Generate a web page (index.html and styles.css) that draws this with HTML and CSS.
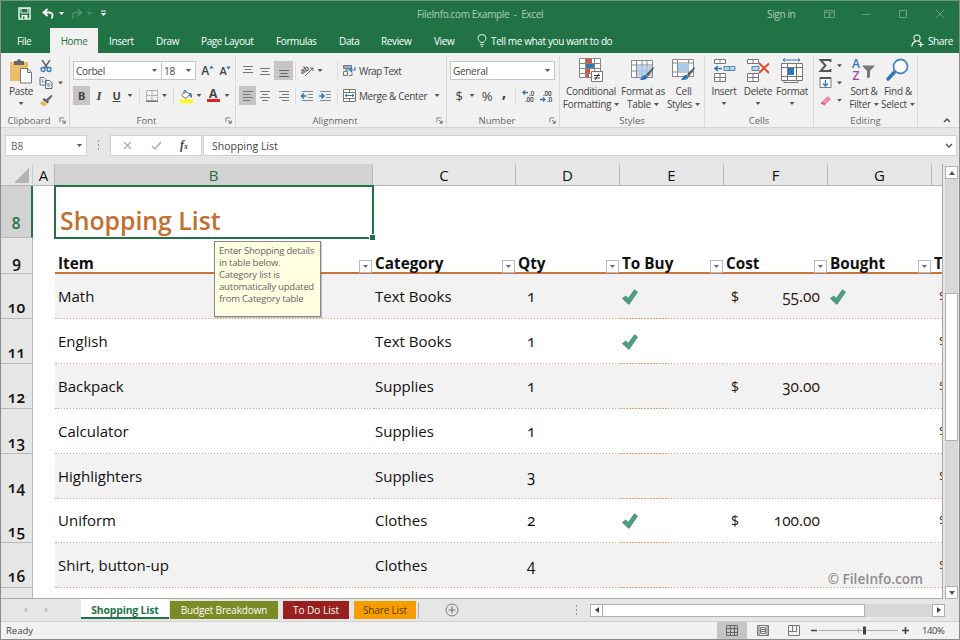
FILE: index.html
```html
<!DOCTYPE html>
<html lang="en">
<head>
<meta charset="utf-8">
<title>FileInfo.com Example - Excel</title>
<link rel="stylesheet" href="styles.css">
</head>
<body>
<svg width="0" height="0" class="defs">
  <symbol id="check" viewBox="0 0 18 18"><path d="M1.500 10.500 4.800 8l2.400 2.600L13.500 1.800l3 2.200-8.600 12.400z" fill="#4fa184" stroke="#3c7f69" stroke-width=".8"/></symbol>
  <symbol id="launch" viewBox="0 0 8 8"><path d="M1 6V1h5" fill="none" stroke="#777"/><path d="M3.500 3.500 7 7M7 4v3H4" fill="none" stroke="#555"/></symbol>
  <symbol id="tbl" viewBox="0 0 26 26"><path d="M1.500 2.500h21v17h-21zM1.500 7h21M1.500 13h21M6.500 2.500v17M12 2.500v17M17 2.500v17" fill="#fff" stroke="#888"/></symbol>
  <symbol id="brush" viewBox="0 0 16 16"><path d="M15.500.8 8 8.500l2 2 5.800-8z" fill="#5a5a5a"/><path d="M7.500 8.800c-2.500-.3-3 2-5.500 5 3 .6 7 .2 7.800-3z" fill="#2f78b7"/></symbol>
</svg>
<div class="window">
  <header class="title">
    <div class="quick">
      <svg width="13" height="13" viewBox="0 0 13 13"><path d="M1 1h11v11H1z" fill="none" stroke="#e8f3ec" stroke-width="1.500"/><path d="M3 1.500h7V6H3z" fill="#217346" stroke="#e8f3ec"/><path d="M3.500 8h6v4h-6z" fill="#e8f3ec"/><path d="M5 9.500h1.500V12H5z" fill="#217346"/></svg>
      <svg class="undo" width="13" height="12" viewBox="0 0 13 12"><path d="M5.500 1 1.500 4.500l4 3.500M2 4.500h5.500c3 0 4.300 3 2 6" fill="none" stroke="#fff" stroke-width="1.900"/></svg>
      <i class="dd white"></i>
      <svg class="redo" width="13" height="12" viewBox="0 0 13 12"><path d="M7.500 1 11.500 4.500l-4 3.500M11 4.500H5.500c-3 0-4.300 3-2 6" fill="none" stroke="#4f9470" stroke-width="1.500"/></svg>
      <i class="dd dim"></i>
      <svg class="custom" width="7" height="7" viewBox="0 0 7 7"><path d="M1 1h5" stroke="#fff"/><path d="M.8 3h5.400L3.500 6z" fill="#fff"/></svg>
    </div>
    <div class="name">FileInfo.com Example&nbsp; -&nbsp; Excel</div>
    <div class="signin">Sign in</div>
    <svg class="wctl" width="122" height="12" viewBox="0 0 122 12" fill="none" stroke="#69a583"><path d="M.5 2.500h10v7H.5zM.5 4.500h10M5.500 9V5.500M4 7l1.500-1.500L7 7M38 6.500h8M75.500 2.500h7v7h-7zM112 2l8 8M120 2l-8 8"/></svg>
  </header>
  <nav class="tabs">
    <span class="t1">File</span><span class="t2">Home</span><span class="t3">Insert</span><span class="t4">Draw</span><span class="t5">Page Layout</span><span class="t6">Formulas</span><span class="t7">Data</span><span class="t8">Review</span><span class="t9">View</span>
    <svg class="bulb" width="10" height="13" viewBox="0 0 10 13" fill="none" stroke="#e4f1e9"><path d="M3.300 8.500C3.300 7 1 6.500 1 4.200a4 3.700 0 0 1 8 0c0 2.300-2.300 2.800-2.300 4.300zM3.300 10.500h3.400M4 12.300h2"/></svg>
    <span class="tell">Tell me what you want to do</span>
    <svg class="person" width="13" height="13" viewBox="0 0 13 13" fill="none" stroke="#fff"><circle cx="6" cy="4" r="3.200"/><path d="M.8 12.500C1.200 9 3 7.800 4.800 7.200M7.500 7.200l1.500.8M7 10.500h5.500M9.800 8v5" stroke-width="1.200"/></svg>
    <span class="share">Share</span>
  </nav>

  <section class="ribbon">
    <div class="group clip">
      <div class="body">
        <div class="big paste">
          <svg width="26" height="26" viewBox="0 0 26 26"><path d="M2 4h18v19H2z" fill="#ebbd6a"/><path d="M6 3h3c0-2.500 4-2.500 4 0h3v4H6z" fill="#666"/><path d="M12.500 10.500h7l4 4V25h-11z" fill="#fff" stroke="#777"/><path d="M19.500 10.500v4h4" fill="none" stroke="#777"/></svg>
          <span>Paste</span><i class="dd"></i>
        </div>
        <div class="stack">
          <div><svg width="14" height="14" viewBox="0 0 14 14"><path d="M3 1l5.500 8M11 1 5.500 9" stroke="#666" stroke-width="1.500"/><g fill="none" stroke="#2f78b7" stroke-width="1.300"><circle cx="4" cy="10.500" r="2"/><circle cx="10" cy="10.500" r="2"/></g></svg></div>
          <div><svg width="14" height="13" viewBox="0 0 14 13" fill="#fff" stroke="#666"><path d="M1 1.500h4l2 2V9H1zM6.500 4.500h4l2.500 2.500v5.500H6.500z"/><path d="M2.500 4h2M2.500 6h3M8 8h3.500M8 10h3.500" stroke="#2f78b7"/></svg><i class="dd"></i></div>
          <div><svg width="14" height="13" viewBox="0 0 14 13"><path d="M12.500.8 7 5.500l2 2L13.500 2z" fill="#666"/><path d="M5 4l5 4-1.500 1.500-5-4z" fill="#555"/><path d="M3 6.500 1 10l4.500 2.500L8 10z" fill="#ebb355"/></svg></div>
        </div>
      </div>
      <div class="label">Clipboard<svg class="ln" width="7" height="7"><use href="#launch"/></svg></div>
    </div>

    <div class="group font">
      <div class="r1"><div class="sel corbel">Corbel<i class="dd"></i></div><div class="sel size">18<i class="dd"></i></div><span class="grow">A<svg width="5" height="4"><path d="M.3 3.500 2.500.5l2.200 3z" fill="#2f78b7"/></svg></span><span class="grow small">A<svg width="5" height="4"><path d="M.3.5h4.400L2.500 3.500z" fill="#2f78b7"/></svg></span></div>
      <div class="r2">
        <b class="on">B</b><i class="ital">I</i><b class="und">U</b><i class="dd"></i><s></s>
        <svg width="12" height="12" viewBox="0 0 12 12" fill="none" stroke="#999"><path d="M.5.5h11v10H.5zM6 .5v10M.5 5.500h11" stroke-dasharray="1.500 .7"/><path d="M0 11.300h12" stroke="#555"/></svg><i class="dd"></i><s></s>
        <svg width="15" height="14" viewBox="0 0 15 14"><path d="M6 2.500 2.500 6.500 7 9.500 11 5z" fill="#fff" stroke="#777"/><path d="M5 5V1.500h2V4" fill="none" stroke="#777"/><path d="M11 3.500c2 1 2.500 3 1.500 5.500C11.500 8 10 7 10.500 5z" fill="#2f78b7"/><path d="M1 10.500h13V14H1z" fill="#ff0"/></svg><i class="dd"></i>
        <span class="fcol">A</span><i class="dd"></i>
      </div>
      <div class="label">Font<svg class="ln" width="7" height="7"><use href="#launch"/></svg></div>
    </div>

    <div class="group align">
      <div class="r1">
        <span><svg width="12" height="12" stroke="#777"><path d="M1 1.500h10M2.500 4.500h7M1 7.500h10"/></svg></span>
        <span><svg width="12" height="12" stroke="#777"><path d="M1 3.500h10M2.500 6.500h7M1 9.500h10"/></svg></span>
        <span class="on"><svg width="12" height="12" stroke="#666"><path d="M1 5.500h10M2.500 8.500h7M1 11.500h10"/></svg></span><s></s>
        <svg width="14" height="13" viewBox="0 0 14 13"><text x="0" y="8" class="ab" transform="rotate(-30 5 8)">ab</text><path d="M4 12 12 4M12 7V4H9" fill="none" stroke="#666"/></svg><i class="dd"></i><s class="far"></s>
        <svg width="13" height="13" viewBox="0 0 13 13" fill="none" stroke="#777"><path d="M.5 1.500h8v3h-8zM.5 7.500h4v4h-4zM6 11.500h3v-3"/><path d="M1 3h8" stroke="#2f78b7"/><path d="M2 6h10v-3M9 4 7 6l2 2" stroke="#2f78b7" stroke-width="1.200"/></svg><span class="txt wrap">Wrap Text</span>
      </div>
      <div class="r2">
        <span class="on"><svg width="12" height="12" stroke="#777"><path d="M1 1.500h10M1 4.500h7M1 7.500h10M1 10.500h7"/></svg></span>
        <span><svg width="12" height="12" stroke="#777"><path d="M1 1.500h10M3 4.500h6M1 7.500h10M3 10.500h6"/></svg></span>
        <span><svg width="12" height="12" stroke="#777"><path d="M1 1.500h10M4 4.500h7M1 7.500h10M4 10.500h7"/></svg></span><s></s>
        <svg width="14" height="12" stroke="#888"><path d="M2 1.500h11M8 4.500h5M8 7.500h5M2 10.500h11"/><path d="M6.500 6H2M4 3.500 1.500 6 4 8.500" fill="none" stroke="#2f78b7" stroke-width="1.600"/></svg>
        <svg width="14" height="12" stroke="#888"><path d="M2 1.500h11M8 4.500h5M8 7.500h5M2 10.500h11"/><path d="M1 6h4.500M3.500 3.500 6 6 3.500 8.500" fill="none" stroke="#2f78b7" stroke-width="1.600"/></svg><s></s>
        <svg width="13" height="13" viewBox="0 0 13 13" fill="#fff" stroke="#777"><path d="M.5.5h12v12H.5zM.5 3.500h12M.5 9.500h12M6.500.5v3M6.500 9.500v3"/><path d="M2 6.500h9M4 5 2 6.500 4 8M9 5l2 1.500L9 8" fill="none" stroke="#2f78b7"/></svg><span class="txt merge">Merge &amp; Center</span><i class="dd"></i>
      </div>
      <div class="label">Alignment<svg class="ln" width="7" height="7"><use href="#launch"/></svg></div>
    </div>

    <div class="group number">
      <div class="r1"><div class="sel general">General<i class="dd"></i></div></div>
      <div class="r2"><span class="sym">$</span><i class="dd"></i><span class="sym">%</span><b class="comma">,</b><s></s>
        <svg width="14" height="14" viewBox="0 0 14 14"><path d="M1 3.500h5M3 1.500l-2 2 2 2" fill="none" stroke="#2f78b7" stroke-width="1.300"/><text x="7" y="6.500" class="dec">.0</text><text x="3" y="13" class="dec">.00</text></svg>
        <svg width="14" height="14" viewBox="0 0 14 14"><path d="M0 10.500h5M3 8.500l2 2-2 2" fill="none" stroke="#2f78b7" stroke-width="1.300"/><text x="3" y="6.500" class="dec">.00</text><text x="7" y="13" class="dec">.0</text></svg></div>
      <div class="label">Number<svg class="ln" width="7" height="7"><use href="#launch"/></svg></div>
    </div>

    <div class="group styles">
      <div class="body">
        <div class="big cond"><svg width="26" height="26" viewBox="0 0 26 26"><path d="M1.500.5h21v19h-21zM1.500 5.500h21M1.500 10.500h21M1.500 15.500h21M7.500.5v19M16.500.5v19" fill="#fff" stroke="#888"/><path d="M8 1h6v4H8zM8 11h4v4H8z" fill="#d9533c"/><path d="M8 6h8v4H8z" fill="#3378b5"/><path d="M8 16h3v3H8z" fill="#d9533c"/><path d="M13.500 13.500h11v10h-11z" fill="#fff" stroke="#777"/><path d="M16 17.500h6M16 20h6M21 15.500l-4 6.500" stroke="#333"/></svg><span>Conditional<br>Formatting<i class="dd"></i></span></div>
        <div class="big fmt"><svg width="26" height="26" viewBox="0 0 26 26"><use href="#tbl"/><path d="M7 7.500h15v11H7z" fill="#a9c9e8" opacity=".8"/><use href="#brush" x="7" y="8" width="18" height="16"/></svg><span>Format as<br>Table<i class="dd"></i></span></div>
        <div class="big cell"><svg width="26" height="26" viewBox="0 0 26 26"><path d="M1.500 1.500h21v17h-21zM1.500 5h21M1.500 14h21M6.500 1.500v17M17.500 1.500v17" fill="#fff" stroke="#888"/><path d="M7 5.500h11v8H7z" fill="#a9c9e8"/><use href="#brush" x="7" y="8" width="18" height="16"/></svg><span>Cell<br>Styles<i class="dd"></i></span></div>
      </div>
      <div class="label">Styles</div>
    </div>

    <div class="group cells">
      <div class="body">
        <div class="big"><svg width="24" height="26" viewBox="0 0 24 26"><path d="M2.500 1.500h11v4h-11zM8 1.500v4M2.500 15.500h11v8h-11zM8 15.500v8M2.500 19.500h11" fill="#fff" stroke="#777"/><path d="M12 8.500h11v4H12zM17.500 8.500v4" fill="#b8d2e8" stroke="#5588ad"/><path d="M3 10.500h7M6 8l-3 2.500L6 13" fill="none" stroke="#2f78b7" stroke-width="1.600"/></svg><span>Insert</span><i class="dd"></i></div>
        <div class="big"><svg width="24" height="26" viewBox="0 0 24 26"><path d="M1.500 1.500h11v4h-11zM7 1.500v4M1.500 15.500h11v8h-11zM7 15.500v8M1.500 19.500h11" fill="#fff" stroke="#777"/><path d="M6 8.500h7v4H6z" fill="#b8d2e8" stroke="#5588ad"/><path d="M13 5l10 10M23 5.500 13 15" stroke="#d9532c" stroke-width="2"/></svg><span>Delete</span><i class="dd"></i></div>
        <div class="big"><svg width="24" height="26" viewBox="0 0 24 26"><path d="M1.500 5.500h21v17h-21zM1.500 9.500h21M1.500 18.500h21M7.500 5.500v17M16.500 5.500v17M4 22.500v2h14v-2" fill="#fff" stroke="#777"/><path d="M8 10h6v7H8z" fill="#2f78b7"/><path d="M3 2h17M5 .3 3 2l2 1.700M18 .3 20 2l-2 1.700" fill="none" stroke="#2f78b7"/></svg><span>Format</span><i class="dd"></i></div>
      </div>
      <div class="label">Cells</div>
    </div>

    <div class="group editing">
      <div class="body">
        <div class="stack">
          <div><svg width="13" height="13" viewBox="0 0 13 13"><path d="M11.500 3V1H1.500l5 5.500-5 5.500h10v-2" fill="none" stroke="#555" stroke-width="1.900"/></svg><i class="dd"></i></div>
          <div><svg width="13" height="13" viewBox="0 0 13 13"><path d="M1 1.500h11v10H1z" fill="#fff" stroke="#777"/><path d="M1 2h11" stroke="#555" stroke-width="2"/><path d="M6.500 4v6M4 7.500 6.500 10 9 7.500" fill="none" stroke="#2f78b7" stroke-width="1.300"/></svg><i class="dd"></i></div>
          <div><svg width="13" height="13" viewBox="0 0 13 13"><path d="M8.500 2 12 5 8 9 4 6.500z" fill="#ef8ba5"/><path d="M3.500 7 7.500 9.500 5.500 11.500 1.500 9.500z" fill="#d96787"/></svg><i class="dd"></i></div>
        </div>
        <div class="big sort"><svg width="26" height="26" viewBox="0 0 26 26"><text x="1" y="10" class="sa">A</text><text x="1.500" y="22" class="sz">Z</text><path d="M11 7.500h13l-5 5.500v6l-3 1.500V13z" fill="#777"/></svg><span>Sort &amp;<br>Filter<i class="dd"></i></span></div>
        <div class="big find"><svg width="24" height="26" viewBox="0 0 24 26"><path d="M9 13.500 2 21" stroke="#2f78b7" stroke-width="3.500" stroke-linecap="round"/><circle cx="14.500" cy="8.500" r="7" fill="#fff" stroke="#4a88c0" stroke-width="1.800"/></svg><span>Find &amp;<br>Select<i class="dd"></i></span></div>
      </div>
      <div class="label">Editing</div>
    </div>
    <svg class="collapse" width="8" height="6"><path d="M1 5l3-3 3 3" fill="none" stroke="#555" stroke-width="1.500"/></svg>
  </section>

  <section class="formula">
    <div class="box ref">B8<i class="dd"></i></div>
    <svg class="dots" width="3" height="10" fill="#999"><path d="M1 0h1v2H1zM1 4h1v2H1zM1 8h1v2H1z"/></svg>
    <div class="box fx"><svg width="9" height="9" stroke="#aaa" stroke-width="1.200"><path d="M1 1l7 7M8 1 1 8"/></svg><svg width="11" height="9" fill="none" stroke="#aaa" stroke-width="1.400"><path d="M1 5l3 3 6-7"/></svg><em>f<small>x</small></em></div>
    <div class="box value"><span>Shopping List</span><svg width="8" height="6"><path d="M1 1l3 3 3-3" fill="none" stroke="#555" stroke-width="1.400"/></svg></div>
  </section>

  <main class="area">
    <div class="sheet">
      <div class="cols line"><div class="corner"><svg width="15" height="15"><path d="M15 0v15H0z" fill="#b4b4b4"/></svg></div><div>A</div><div class="cur">B</div><div>C</div><div>D</div><div>E</div><div>F</div><div>G</div><div></div></div>
      <div class="line row8"><div class="rh cur">8</div><div></div><div class="active">Shopping List<div class="tip">Enter Shopping details<br>in table below.<br>Category list is<br>automatically updated<br>from Category table</div></div></div>
      <div class="line row9"><div class="rh">9</div><div></div><div class="h">Item<u></u></div><div class="h">Category<u></u></div><div class="h">Qty<u></u></div><div class="h">To Buy<u></u></div><div class="h">Cost<u></u></div><div class="h">Bought<u></u></div><div class="h">T</div></div>
      <div class="line data odd"><div class="rh">10</div><div></div><div>Math</div><div>Text Books</div><div class="q">1</div><div><svg class="ck"><use href="#check"/></svg></div><div class="cost"><span>$</span><span>55.00</span></div><div><svg class="ck"><use href="#check"/></svg></div><div class="d">$</div></div>
      <div class="line data"><div class="rh">11</div><div></div><div>English</div><div>Text Books</div><div class="q">1</div><div><svg class="ck"><use href="#check"/></svg></div><div></div><div></div><div class="d">$</div></div>
      <div class="line data odd"><div class="rh">12</div><div></div><div>Backpack</div><div>Supplies</div><div class="q">1</div><div></div><div class="cost"><span>$</span><span>30.00</span></div><div></div><div class="d">$</div></div>
      <div class="line data"><div class="rh">13</div><div></div><div>Calculator</div><div>Supplies</div><div class="q">1</div><div></div><div></div><div></div><div class="d">$</div></div>
      <div class="line data odd"><div class="rh">14</div><div></div><div>Highlighters</div><div>Supplies</div><div class="q">3</div><div></div><div></div><div></div><div class="d">$</div></div>
      <div class="line data"><div class="rh">15</div><div></div><div>Uniform</div><div>Clothes</div><div class="q">2</div><div><svg class="ck"><use href="#check"/></svg></div><div class="cost"><span>$</span><span>100.00</span></div><div></div><div class="d">$</div></div>
      <div class="line data odd"><div class="rh">16</div><div></div><div>Shirt, button-up</div><div>Clothes</div><div class="q">4</div><div></div><div></div><div></div><div class="d">$</div></div>
      <div class="line last"><div class="rh"></div></div>
      <div class="mark">© FileInfo.com</div>
    </div>
    <div class="vscroll"><div class="sb"><svg width="6" height="4"><path d="M0 4 3 0l3 4z" fill="#555"/></svg></div><div class="track"><div class="thumb"></div></div><div class="sb"><svg width="6" height="4"><path d="M0 0h6L3 4z" fill="#555"/></svg></div></div>
  </main>

  <footer class="sheets">
    <div class="arrows"><svg width="26" height="6" fill="#bbb"><path d="M4 0v6L1 3zM22 0v6l3-3z"/></svg></div>
    <div class="st a">Shopping List</div><div class="st b">Budget Breakdown</div><div class="st c">To Do List</div><div class="st d">Share List</div><s></s>
    <svg class="plus" width="14" height="14" fill="none" stroke="#777"><circle cx="7" cy="7" r="6"/><path d="M7 3.500v7M3.500 7h7" stroke-width="1.200"/></svg>
    <svg class="dots" width="3" height="10" fill="#999"><path d="M1 0h1v2H1zM1 4h1v2H1zM1 8h1v2H1z"/></svg>
    <div class="hscroll"><div class="sb"><svg width="4" height="6"><path d="M4 0v6L0 3z" fill="#444"/></svg></div><div class="hthumb"></div><div class="sb right"><svg width="4" height="6"><path d="M0 0v6l4-3z" fill="#444"/></svg></div></div>
  </footer>
  <div class="status">
    <span class="ready">Ready</span>
    <div class="view on"><svg width="12" height="11" fill="none" stroke="#666"><path d="M.5.500h11v10H.5zM.5 3.500h11M.5 7.500h11M4.500.5v10M8.500.5v10"/></svg></div>
    <div class="view"><svg width="12" height="11" fill="none" stroke="#777"><path d="M.5.500h11v10H.5zM3.500 2.500h5v6h-5zM2 .5v10M10 .5v10M4 4.500h4M4 6.500h4"/></svg></div>
    <div class="view"><svg width="12" height="11" fill="none" stroke="#777"><path d="M.5.500h11v10H.5zM4.500.5v6M8.500.5v6H.5"/></svg></div>
    <svg class="zoom" width="100" height="11"><path d="M1 5.500h6M92 5.500h7M95.500 2v7" stroke="#444" stroke-width="1.600"/><path d="M9 5.500h79M48.500 3v5" stroke="#aaa"/><path d="M53 1.500h3v8h-3z" fill="#444"/></svg>
    <span class="pct">140%</span>
  </div>
</div>
</body>
</html>
```
FILE: styles.css
```css
* { box-sizing: border-box; }
body { margin: 0; font-family: "Open Sans", "Noto Sans", sans-serif; font-size: 10px; color: #444; }
.defs { position: absolute; }
svg { display: block; flex: none; overflow: visible; }
.window { width: 960px; height: 640px; border: 1px solid #8b8b8b; border-top-color: #6b9a7e; display: flex; flex-direction: column; overflow: hidden; background: #e6e6e6; }
.dd { display: block; flex: none; width: 5px; height: 3px; background: #555; clip-path: polygon(0 0, 100% 0, 50% 100%); }
.dd.white { background: #fff; }
.dd.dim { background: #4f9470; }

/* Title bar */
.title { height: 27px; background: #217346; display: flex; align-items: center; color: #a9cfb9; letter-spacing: -.35px; flex: none; padding-bottom: 2px; }
.quick { display: flex; align-items: center; width: 416px; padding-left: 17px; }
.undo { margin-left: 11px; } .quick .dd { margin-left: 4px; }
.redo { margin-left: 6px; } .custom { margin-left: 8px; }
.name { width: 350px; white-space: nowrap; }
.signin { width: 57px; }

/* Ribbon tabs */
.tabs { height: 25px; background: #217346; display: flex; align-items: center; color: #fff; flex: none; white-space: nowrap; letter-spacing: -.38px; font-weight: 500; }
.tabs span { line-height: 26px; height: 25px; }
.t1 { width: 49px; padding-left: 16px; }
.t2 { width: 48px; background: #f1f1f1; color: #217346; text-align: center; }
.t3 { width: 58px; padding-left: 11px; }
.t4 { width: 45px; }
.t5 { width: 75px; }
.t6 { width: 63px; }
.t7 { width: 42px; }
.t8 { width: 53px; }
.t9 { width: 43px; }
.tabs .tell { width: 424px; padding-left: 4px; letter-spacing: -.38px; }
.share { padding-left: 4px; }

/* Ribbon */
.ribbon { height: 75px; background: #f1f1f1; border-bottom: 1px solid #d4d4d4; display: flex; flex: none; position: relative; letter-spacing: -.3px; }
.group { height: 71px; margin-top: 3px; border-right: 1px solid #d9d9d9; display: flex; flex-direction: column; flex: none; white-space: nowrap; }
.clip { width: 69px; } .font { width: 166px; } .align { width: 211px; } .number { width: 113px; } .styles { width: 145px; } .cells { width: 109px; } .editing { width: 104px; }
.label { height: 14px; line-height: 15px; text-align: center; color: #666; font-size: 9.500px; margin-top: auto; position: relative; letter-spacing: 0; padding-right: 12px; }
.styles .label, .cells .label, .editing .label { padding-right: 0; }
.ln { position: absolute; right: 3px; top: 4px; }
.body { display: flex; height: 54px; padding-top: 2px; }
.big { display: flex; flex-direction: column; align-items: center; text-align: center; line-height: 13px; }
.big > svg { margin-bottom: 1px; }
.big > .dd { margin-top: 4px; }
.big span .dd { display: inline-block; margin-left: 3px; vertical-align: 2px; }
.paste { width: 26px; margin-left: 7px; }
.stack { margin-left: 5px; display: flex; flex-direction: column; }
.stack div { height: 18px; display: flex; align-items: center; margin-top: -1px; margin-bottom: 1px; }
.stack .dd { margin-left: 5px; }
.r1, .r2 { height: 19px; display: grid; align-items: center; justify-items: center; margin-top: 5px; }
.r2 { margin-top: 6px; }
.r1 > s, .r2 > s { width: 1px; height: 18px; background: #dcdcdc; }
.sel { width: 100%; height: 19px; background: #fff; border: 1px solid #c6c6c6; display: flex; align-items: center; justify-content: space-between; padding: 0 4px 0 2px; }
.on { background: #c5c5c5; }
.r1 .on, .r2 .on { width: 100%; height: 19px; display: grid; place-items: center; }
.font .r1 { grid-template-columns: 89px 34px 18px 18px; margin-left: 3px; justify-content: start; }
.size { border-left: 0; }
.grow { font-size: 12px; font-weight: 600; display: flex; padding-left: 5px; }
.grow svg { margin-top: 3px; }
.small { font-size: 11px; }
.font .r2 { grid-template-columns: 17px 18px 17px 10px 8px 17px 9px 8px 18px 8px 20px 8px; margin-left: 3px; justify-content: start; font-size: 11px; }
.ital { font-family: "Liberation Serif", serif; font-weight: bold; font-size: 13px; }
.und { text-decoration: underline; }
.fcol { font-weight: 700; font-size: 12px; line-height: 10px; border-bottom: 3px solid #e02020; width: 13px; text-align: center; }
.align .r1 { grid-template-columns: 17px 18px 19px 4px 21px 4px 19px 16px 1fr; margin-left: 3px; }
.align .far { justify-self: end; margin-right: 3px; }
.align .r2 { grid-template-columns: 17px 18px 19px 4px 19px 18px 7px 16px 75px 10px; margin-left: 3px; justify-content: start; }
.txt { justify-self: start; padding-left: 2px; letter-spacing: -.38px; }
.wrap { letter-spacing: -.6px; }
.ab { font: bold 8px "Open Sans", sans-serif; fill: #666; }
.number .r1 { padding: 0 4px 0 3px; }
.number .r2 { grid-template-columns: 18px 8px 22px 12px 11px 15px 21px; margin-left: 3px; justify-content: start; }
.sym { font-size: 13px; }
.comma { font-size: 16px; line-height: 10px; margin-top: -8px; }
.dec { font: 600 6.500px "Open Sans", sans-serif; fill: #444; letter-spacing: -.3px; }
.cond { width: 62px; } .fmt { width: 42px; } .cell { width: 39px; }
.cells .body { padding-left: 2px; }
.cells .big { width: 34px; }
.sort { width: 34px; margin-left: 5px; } .find { width: 34px; }
.sa { font: 600 12px "Open Sans", sans-serif; fill: #2f78b7; }
.sz { font: 600 12px "Open Sans", sans-serif; fill: #9b45b5; }
.collapse { margin: 64px 0 0 25px; }

/* Formula bar */
.formula { height: 36px; display: flex; padding: 7px 0 0 4px; flex: none; }
.box { height: 21px; background: #fff; border: 1px solid #d0d0d0; display: flex; align-items: center; }
.ref { width: 82px; justify-content: space-between; padding: 0 4px 0 5px; color: #666; }
.formula .dots { margin: 5px 10px 0 10px; }
.fx { width: 92px; padding-left: 12px; gap: 19px; margin-right: 1px; }
.fx em { font: italic bold 12px "Liberation Serif", serif; margin-left: -1px; }
.fx small { font-size: 8px; }
.value { width: 754px; justify-content: space-between; padding: 0 3px 0 8px; font-size: 10.500px; }

/* Grid */
.area { height: 435px; display: flex; flex: none; }
.sheet { width: 942px; overflow: hidden; background: #fff; position: relative; border-right: 1px solid #aaa; border-bottom: 1px solid #aaa; color: #111; font-size: 15px; }
.line { display: grid; grid-template-columns: 32px 22px 318px 143px 104px 104px 104px 104px 10px; white-space: nowrap; }
.cols { height: 22px; background: #e6e6e6; border-bottom: 1px solid #b5b5b5; }
.cols > div { text-align: center; line-height: 22px; border-right: 1px solid #b9b9b9; font-weight: 500; font-size: 15px; }
.cols > div:first-child { border-right-color: #ccc; }
.cols > div:last-child { border: 0; }
.cols > .corner { padding: 4px 0 0 13px; }
.cols > .cur { background: #d2d2d2; color: #217346; }
.rh { background: #e6e6e6; border-right: 1px solid #b5b5b5; border-bottom: 1px solid #b9b9b9; font-weight: 600; font-size: 15.500px; text-align: center; display: flex; align-items: flex-end; justify-content: center; line-height: 20px; font-variant-numeric: oldstyle-nums; padding-bottom: 1px; }
.rh.cur { background: #d2d2d2; color: #217346; border-right: 2px solid #217346; padding-bottom: 4px; }
.row8 { height: 52px; }
.active { position: relative; outline: 2px solid #217346; outline-offset: -1px; font-size: 24.800px; font-weight: 600; color: #c0702f; padding: 16px 0 0 5px; line-height: 36px; }
.active::after { content: ""; position: absolute; right: -2px; bottom: -2px; width: 5px; height: 5px; background: #217346; border: 1px solid #fff; border-width: 1px 0 0 1px; }
.tip { position: absolute; z-index: 2; left: 159px; top: 55px; width: 107px; height: 76px; background: #ffffe1; border: 1px solid #888; box-shadow: 1px 1px 1px #0003; font-size: 9.500px; font-weight: 400; line-height: 12px; color: #666; padding: 3px 4px; letter-spacing: -.2px; }
.row9 { height: 36px; }
.h { height: 36px; font-weight: 700; font-size: 15.300px; border-bottom: 2px solid #c8753d; padding: 14px 0 0 2px; line-height: 22px; position: relative; }
.h:nth-child(3) { padding-left: 3px; }
.h u { position: absolute; right: 1px; bottom: -1px; width: 13px; height: 13px; background: #fff; border: 1px solid #b5bcc8; display: grid; place-items: center; }
.h u::after { content: ""; width: 5px; height: 3px; background: #5a6a85; clip-path: polygon(0 0, 100% 0, 50% 100%); }
.data { height: 45px; }
.data:nth-child(8) { height: 44px; }
.data > div:nth-child(n+3) { background: repeating-linear-gradient(90deg, #dba37a 0 1.500px, transparent 1.500px 3px) left bottom / 100% 1px no-repeat; padding-left: 2px; line-height: 45px; height: 100%; }
.data > div:nth-child(3) { padding-left: 3px; }
.data.odd > div:nth-child(n+3) { background-color: #f2f2f2; }
.data > div.q:nth-child(n+3) { padding-left: 11px; font-variant-numeric: oldstyle-nums; font-size: 15.500px; }
.data > div.cost:nth-child(n+3) { display: flex; justify-content: space-between; padding: 0 8px 0 7px; font-variant-numeric: oldstyle-nums; color: #2d1512; font-size: 15.500px; }
.cost span:first-child { font-size: 14px; }
.data > div.d:nth-child(n+3) { padding-left: 7px; overflow: hidden; font-size: 13px; color: #5a2a22; }
.ck { width: 18px; height: 18px; margin: 14px 0 0 -1px; }
.last { height: 11px; }
.mark { position: absolute; right: 19px; bottom: 9px; font-size: 13.600px; font-weight: 600; color: #8d8d8d; line-height: 20px; }

.vscroll { width: 16px; padding: 2px 1px 0 2px; display: flex; flex-direction: column; background: #e6e6e6; }
.sb { width: 13px; height: 13px; background: #fff; border: 1px solid #b0b0b0; display: grid; place-items: center; flex: none; }
.track { height: 409px; background: #d8d8d8; padding-top: 114px; }
.thumb { height: 148px; width: 13px; background: #fff; border: 1px solid #b0b0b0; }

/* Sheet tabs */
.sheets { height: 23px; display: flex; align-items: center; flex: none; border-bottom: 1px solid #d0d0d0; white-space: nowrap; }
.arrows { width: 80px; padding-left: 22px; }
.st { height: 18px; line-height: 18px; text-align: center; color: #fff; font-size: 10px; letter-spacing: -.15px; }
.st.a { width: 88px; height: 20px; line-height: 22px; align-self: flex-start; background: #fff; color: #217346; font-size: 10.400px; font-weight: 700; border-bottom: 2px solid #217346; margin-right: 1px; }
.st.b { width: 108px; background: #7a8a25; margin-right: 5px; }
.st.c { width: 66px; background: #98201f; margin-right: 5px; letter-spacing: 0; }
.st.d { width: 62px; background: #f79d00; color: #5a3a00; margin-right: 2px; }
.sheets > s { width: 1px; height: 15px; background: #aaa; }
.plus { margin-left: 26px; }
.sheets .dots { margin-left: 116px; }
.hscroll { margin-left: 12px; display: flex; width: 355px; background: #d8d8d8; }
.sb.right { margin-left: auto; }
.hthumb { width: 262px; height: 13px; background: #fff; border: 1px solid #b0b0b0; border-left: 0; }

/* Status bar */
.status { height: 17px; background: #f1f1f1; display: flex; align-items: center; flex: none; font-size: 9.500px; }
.ready { width: 716px; padding-left: 5px; }
.view { width: 30px; height: 17px; display: grid; place-items: center; margin-right: 1px; }
.zoom { margin-left: 0; }
.pct { margin-left: 12px; letter-spacing: -.4px; }
```
